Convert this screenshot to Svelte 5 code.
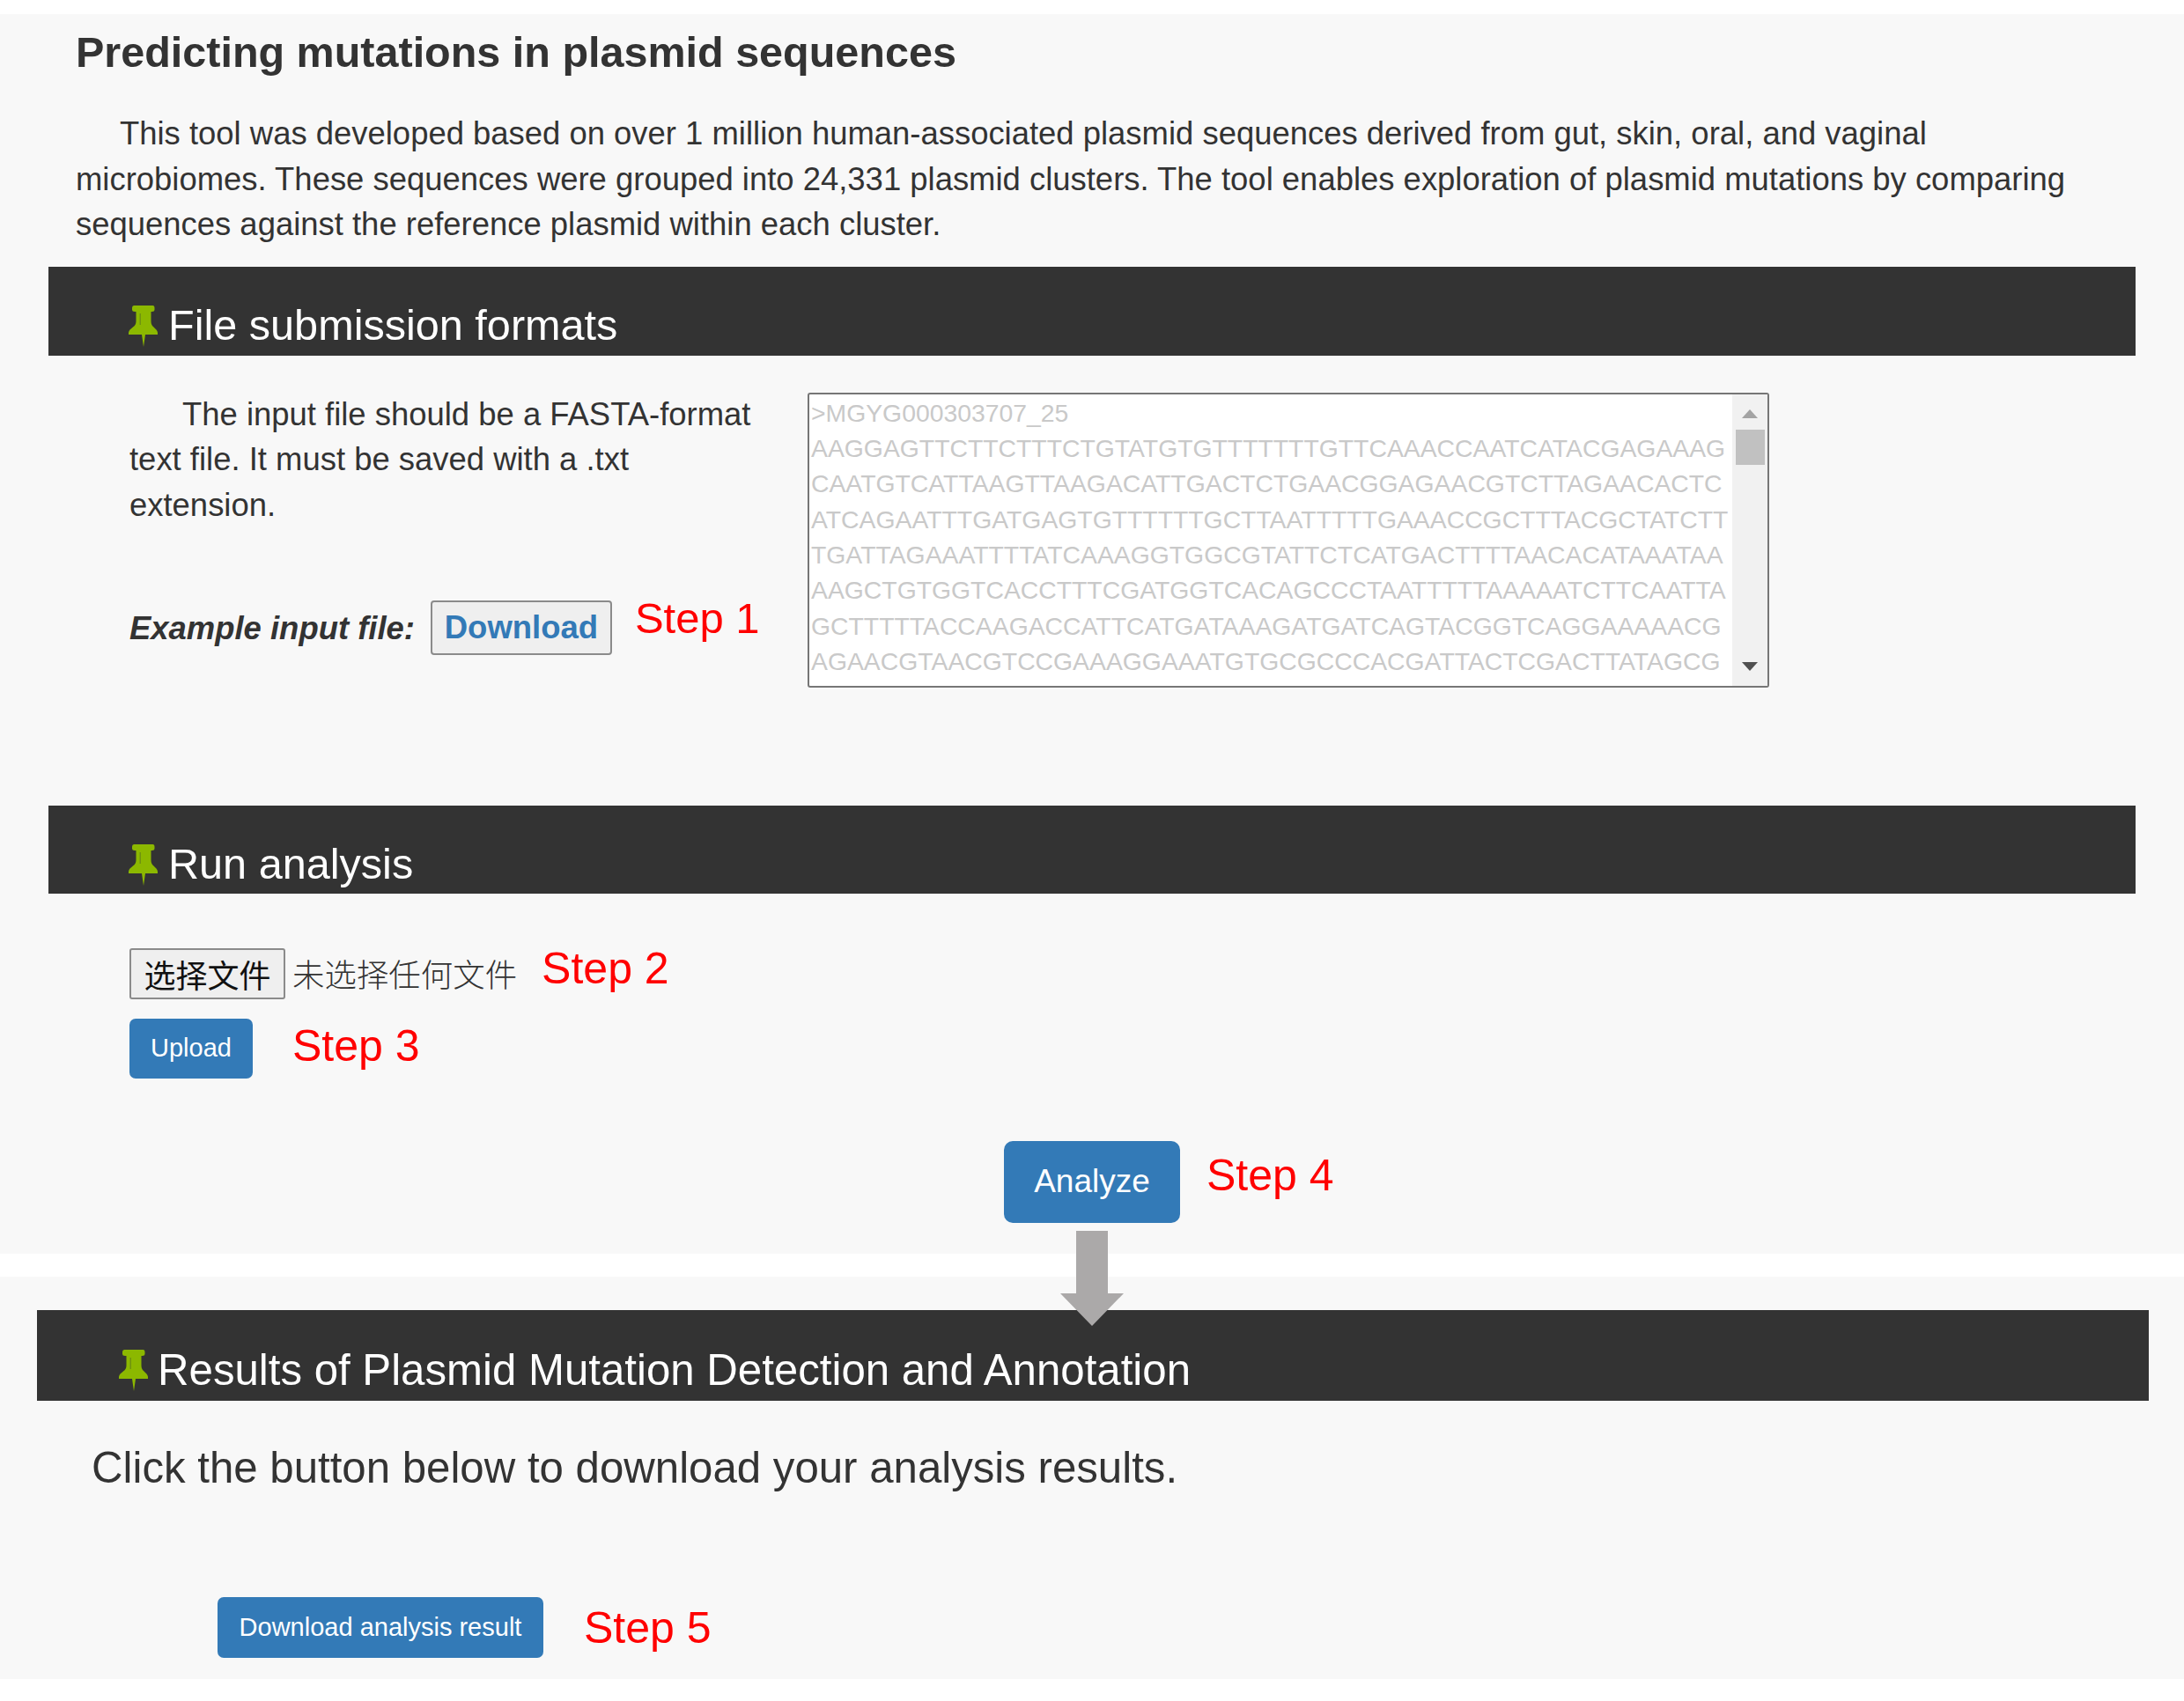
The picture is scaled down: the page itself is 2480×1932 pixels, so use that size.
<script lang="ts">
    const sampleLines: string[] = [
        ">MGYG000303707_25",
        "AAGGAGTTCTTCTTTCTGTATGTGTTTTTTTGTTCAAACCAATCATACGAGAAAG",
        "CAATGTCATTAAGTTAAGACATTGACTCTGAACGGAGAACGTCTTAGAACACTC",
        "ATCAGAATTTGATGAGTGTTTTTTGCTTAATTTTTGAAACCGCTTTACGCTATCTT",
        "TGATTAGAAATTTTATCAAAGGTGGCGTATTCTCATGACTTTTAACACATAAATAA",
        "AAGCTGTGGTCACCTTTCGATGGTCACAGCCCTAATTTTTAAAAATCTTCAATTA",
        "GCTTTTTACCAAGACCATTCATGATAAAGATGATCAGTACGGTCAGGAAAAACG",
        "AGAACGTAACGTCCGAAAGGAAATGTGCGCCCACGATTACTCGACTTATAGCG",
    ];
</script>

{#snippet pin()}
    <svg class="pin" viewBox="0 0 33 47" aria-hidden="true">
        <path
            d="M6.500 0H27.500Q29.500 0 29.500 3V4.500Q29.500 7 26.500 7H25.500V18Q25.500 22 28.500 24.500L31.500 27.500Q33.500 30 33 33H19L17 47L15 33H0Q-.5 30 1.500 27.500L5 24.500Q8.500 22 8.500 18V7H7Q4 7 4 4.500V3Q4 0 6.500 0Z"
            fill="#8cb800"
        />
        <rect x="12.500" y="9" width="1.500" height="13" fill="#6f9210" />
    </svg>
{/snippet}

<div class="page">
    <section class="panel first">
        <h1>Predicting mutations in plasmid sequences</h1>
        <p class="intro">
            This tool was developed based on over 1 million human-associated plasmid sequences derived from gut, skin, oral, and vaginal
            microbiomes. These sequences were grouped into 24,331 plasmid clusters. The tool enables exploration of plasmid mutations by comparing
            sequences against the reference plasmid within each cluster.
        </p>

        <h2 class="bar">{@render pin()}<span>File submission formats</span></h2>
        <div class="formats">
            <div class="formats-text">
                <p class="indented">
                    The input file should be a FASTA-format text file. It must be saved with a .txt extension.
                </p>
                <div class="example">
                    <b>Example input file:</b>
                    <button class="plain">Download</button>
                    <span class="step">Step 1</span>
                </div>
            </div>
            <div class="sample">
                <div class="sample-lines">
                    {#each sampleLines as line}
                        <div>{line}</div>
                    {/each}
                </div>
                <div class="scrollbar">
                    <i class="arrow up"></i>
                    <i class="thumb"></i>
                    <i class="arrow down"></i>
                </div>
            </div>
        </div>

        <h2 class="bar run">{@render pin()}<span>Run analysis</span></h2>
        <div class="run-body">
            <div class="file-row">
                <button class="file-btn">选择文件</button>
                <span class="file-name">未选择任何文件</span>
                <span class="step">Step 2</span>
            </div>
            <div class="upload-row">
                <button class="primary small">Upload</button>
                <span class="step">Step 3</span>
            </div>
            <div class="analyze-row">
                <button class="primary analyze">Analyze</button>
                <span class="step">Step 4</span>
            </div>
        </div>
    </section>

    <section class="panel second">
        <h2 class="bar results">{@render pin()}<span>Results of Plasmid Mutation Detection and Annotation</span></h2>
        <p class="click">Click the button below to download your analysis results.</p>
        <div class="result-row">
            <button class="primary small wide">Download analysis result</button>
            <span class="step">Step 5</span>
        </div>
    </section>

    <svg class="flow-arrow" viewBox="0 0 72 108" aria-hidden="true">
        <polygon points="18,0 54,0 54,71 72,71 36,108 0,71 18,71" fill="#aba9a9" />
    </svg>
</div>

<style>
    :global(body) {
        background: #fff;
    }

    .page {
        position: relative;
        width: 2480px;
        height: 1932px;
        padding-top: 16px;
        box-sizing: border-box;
        font-family: "Liberation Sans", Arial, sans-serif;
        font-size: 36.450px;
        line-height: 51.6px;
        color: #333;
    }

    .panel {
        background: #f8f8f8;
    }

    .first {
        height: 1408px;
        padding-top: 17px;
        box-sizing: border-box;
    }

    .second {
        height: 457px;
        margin-top: 26px;
        padding-top: 38px;
        box-sizing: border-box;
    }

    h1 {
        margin: 0 0 41px;
        padding-left: 86px;
        font-size: 48.500px;
        line-height: 52px;
        font-weight: 700;
    }

    p {
        margin: 0;
    }

    .intro {
        padding: 0 86px;
        text-indent: 50px;
        white-space: pre-line;
    }

    .bar {
        display: flex;
        height: 101px;
        margin: 22px 55px 0;
        padding: 40px 0 0 91px;
        box-sizing: border-box;
        gap: 12px;
        background: #333;
        color: #fff;
        font-size: 48.600px;
        line-height: 52px;
        font-weight: 400;
    }

    .bar.run {
        height: 100px;
        margin-top: 0;
    }

    .bar.results {
        height: 103px;
        margin: 0 40px 0 42px;
        padding: 42px 0 0 93px;
        gap: 11px;
        font-size: 49.200px;
    }

    .pin {
        flex: none;
        width: 33px;
        height: 47px;
        margin-top: 4px;
    }

    .results .pin {
        margin-top: 3px;
    }

    .formats {
        display: flex;
        height: 511px;
        padding: 41px 0 0 147px;
        box-sizing: border-box;
    }

    .formats-text {
        width: 733px;
        margin-right: 38px;
    }

    .indented {
        text-indent: 60px;
    }

    .example {
        display: flex;
        align-items: center;
        height: 62px;
        margin-top: 82px;
    }

    .example b {
        font-style: italic;
        margin-top: 3px;
    }

    .plain {
        width: 206px;
        height: 62px;
        margin: 0 26px 0 18px;
        padding: 0;
        border: 2px solid #8b8b8b;
        border-radius: 4px;
        background: #efefef;
        color: #337ab7;
        font: 700 36.500px "Liberation Sans", Arial, sans-serif;
    }

    .step {
        font-size: 50px;
        line-height: 52px;
        color: #f00;
    }

    .example .step {
        margin-bottom: 21px;
        font-size: 49px;
    }

    .sample {
        display: flex;
        width: 1092px;
        height: 335px;
        margin: 1px 0 0 -1px;
        box-sizing: border-box;
        border: 2px solid #767676;
        border-radius: 3px;
        background: #fff;
    }

    .sample-lines {
        flex: 1;
        min-width: 0;
        padding: 1px 0 0 2px;
        overflow: hidden;
        color: #c9c9c9;
        font-size: 28.350px;
        line-height: 40.300px;
        white-space: nowrap;
    }

    .scrollbar {
        position: relative;
        flex: none;
        width: 40px;
        background: #f1f1f1;
    }

    .thumb {
        position: absolute;
        left: 4px;
        top: 40px;
        width: 33px;
        height: 40px;
        background: #c1c1c1;
    }

    .arrow {
        position: absolute;
        left: 11px;
        width: 0;
        height: 0;
        border-left: 9px solid transparent;
        border-right: 9px solid transparent;
    }

    .arrow.up {
        top: 17px;
        border-bottom: 10px solid #a3a3a3;
    }

    .arrow.down {
        bottom: 17px;
        border-top: 10px solid #505050;
    }

    .run-body {
        padding-top: 62px;
    }

    .file-row {
        display: flex;
        align-items: center;
        height: 58px;
        padding-left: 147px;
    }

    .file-btn {
        width: 177px;
        height: 58px;
        padding: 0;
        border: 2px solid #8b8b8b;
        border-radius: 3px;
        background: #efefef;
        color: #111;
        font: 36px "Noto Sans CJK SC", sans-serif;
    }

    .file-name {
        margin: 0 28px 0 8px;
        font-family: "Noto Sans CJK SC", sans-serif;
        font-weight: 300;
    }

    .file-row .step {
        margin-bottom: 11px;
    }

    .upload-row {
        display: flex;
        align-items: center;
        height: 68px;
        margin-top: 22px;
        padding-left: 147px;
        gap: 45px;
    }

    .primary {
        padding: 0;
        border: 0;
        border-radius: 7px;
        background: #337ab7;
        color: #fff;
        font-family: "Liberation Sans", Arial, sans-serif;
    }

    .small {
        width: 140px;
        height: 68px;
        font-size: 29px;
    }

    .upload-row .step {
        margin-bottom: 5px;
    }

    .analyze-row {
        display: grid;
        grid-template-columns: 1fr auto 1fr;
        align-items: center;
        margin-top: 71px;
    }

    .analyze {
        grid-column: 2;
        width: 200px;
        height: 93px;
        border-radius: 10px;
        font-size: 37px;
    }

    .analyze-row .step {
        margin: 0 0 15px 30px;
    }

    .click {
        margin-top: 46px;
        padding-left: 104px;
        font-size: 49.200px;
        line-height: 60px;
    }

    .result-row {
        display: flex;
        align-items: center;
        margin-top: 117px;
        padding-left: 247px;
        gap: 46px;
    }

    .wide {
        width: 370px;
        height: 69px;
    }

    .flow-arrow {
        position: absolute;
        left: 50%;
        top: 1398px;
        width: 72px;
        height: 108px;
        transform: translateX(-50%);
    }
</style>
